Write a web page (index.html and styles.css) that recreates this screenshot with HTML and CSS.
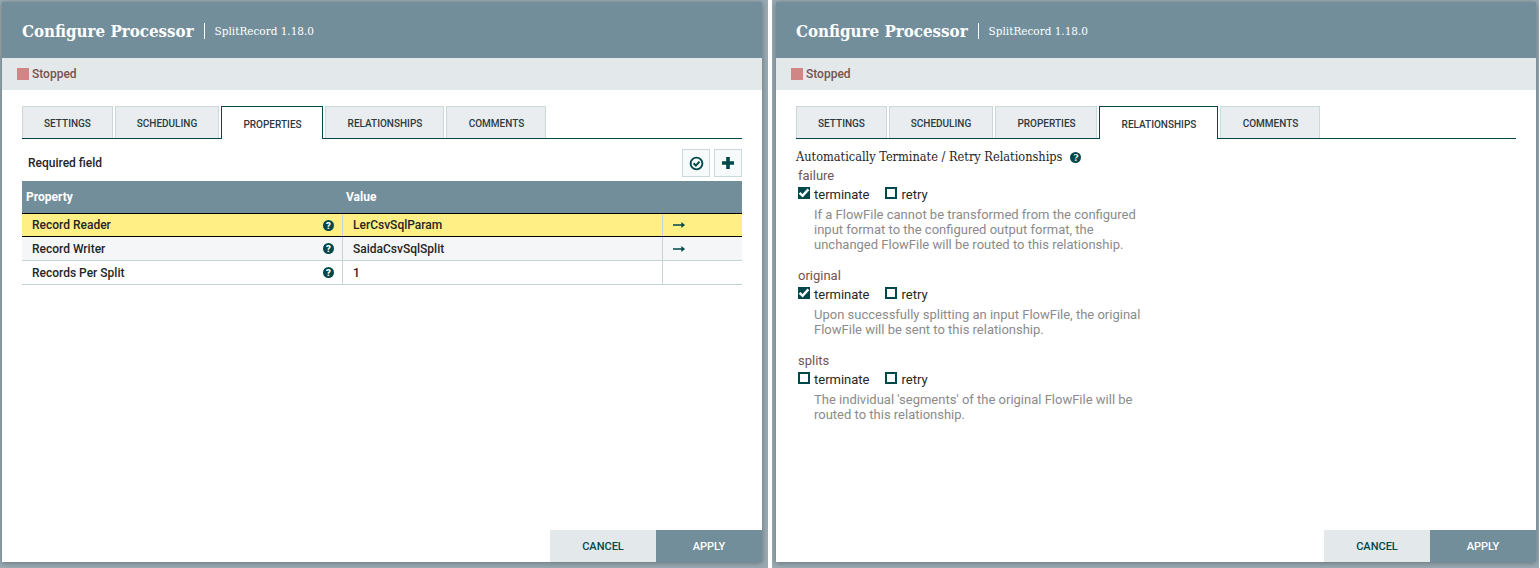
FILE: index.html
```html
<!DOCTYPE html>
<html lang="en">
<head>
    <meta charset="UTF-8">
    <meta name="viewport" content="width=device-width, initial-scale=1.0">
    <title>Configure Processor</title>
    <link rel="stylesheet" href="styles.css">
</head>
<body>
    <div class="shots">
        <!-- Properties tab -->
        <section class="shot shot-left">
            <div class="dialog">
                <header class="dialog-header">
                    <h1>Configure Processor</h1>
                    <span class="processor-type">SplitRecord 1.18.0</span>
                </header>
                <div class="status-bar"><span class="status-box"></span>Stopped</div>
                <div class="dialog-body">
                    <div class="tabs">
                        <div class="tab">SETTINGS</div>
                        <div class="tab tab-scheduling">SCHEDULING</div>
                        <div class="tab tab-properties active">PROPERTIES</div>
                        <div class="tab tab-relationships">RELATIONSHIPS</div>
                        <div class="tab tab-comments">COMMENTS</div>
                    </div>
                    <div class="toolbar">
                        <span class="required">Required field</span>
                        <div class="tool-buttons">
                            <button class="tool-btn">
                                <svg width="15" height="15" viewBox="0 0 15 15"><circle cx="7.5" cy="7.5" r="5.9" fill="none" stroke="#004849" stroke-width="1.9"/><path d="M4.6 7.2l2.3 2.4 3.6-4" fill="none" stroke="#004849" stroke-width="2"/></svg>
                            </button>
                            <button class="tool-btn">
                                <svg width="14" height="14" viewBox="0 0 14 14"><path d="M5.2 1h3.6v4.2H13v3.6H8.8V13H5.2V8.8H1V5.2h4.2z" fill="#004849"/></svg>
                            </button>
                        </div>
                    </div>
                    <div class="prop-table">
                        <div class="prop-head">
                            <div class="col-name">Property</div>
                            <div class="col-value">Value</div>
                        </div>
                        <div class="prop-row selected">
                            <div class="col-name">Record Reader<span class="help">?</span></div>
                            <div class="col-value">LerCsvSqlParam</div>
                            <div class="col-action"><svg class="arrow" width="12" height="6" viewBox="0 0 12 6"><path d="M0 2.2h9v1.6H0zM8.4 0L12 3 8.4 6z" fill="#004849"/></svg></div>
                        </div>
                        <div class="prop-row alt">
                            <div class="col-name">Record Writer<span class="help">?</span></div>
                            <div class="col-value">SaidaCsvSqlSplit</div>
                            <div class="col-action"><svg class="arrow" width="12" height="6" viewBox="0 0 12 6"><path d="M0 2.2h9v1.6H0zM8.4 0L12 3 8.4 6z" fill="#004849"/></svg></div>
                        </div>
                        <div class="prop-row">
                            <div class="col-name">Records Per Split<span class="help">?</span></div>
                            <div class="col-value">1</div>
                            <div class="col-action"></div>
                        </div>
                    </div>
                </div>
                <div class="dialog-footer">
                    <div class="btn btn-cancel">CANCEL</div>
                    <div class="btn btn-apply">APPLY</div>
                </div>
            </div>
        </section>

        <!-- Relationships tab -->
        <section class="shot shot-right">
            <div class="dialog">
                <header class="dialog-header">
                    <h1>Configure Processor</h1>
                    <span class="processor-type">SplitRecord 1.18.0</span>
                </header>
                <div class="status-bar"><span class="status-box"></span>Stopped</div>
                <div class="dialog-body">
                    <div class="tabs">
                        <div class="tab">SETTINGS</div>
                        <div class="tab tab-scheduling">SCHEDULING</div>
                        <div class="tab tab-properties">PROPERTIES</div>
                        <div class="tab tab-relationships active">RELATIONSHIPS</div>
                        <div class="tab tab-comments">COMMENTS</div>
                    </div>
                    <div class="rel-title">Automatically Terminate / Retry Relationships<span class="help">?</span></div>
                    <div class="rel">
                        <div class="rel-name">failure</div>
                        <div class="rel-options">
                            <span class="check on"><svg width="12" height="12" viewBox="0 0 12 12"><path d="M1.6 5.8l3 3 5.8-6.4" fill="none" stroke="#fff" stroke-width="2.5"/></svg></span><span class="opt">terminate</span>
                            <span class="check"></span><span class="opt">retry</span>
                        </div>
                        <p class="rel-desc">If a FlowFile cannot be transformed from the configured<br>input format to the configured output format, the<br>unchanged FlowFile will be routed to this relationship.</p>
                    </div>
                    <div class="rel">
                        <div class="rel-name">original</div>
                        <div class="rel-options">
                            <span class="check on"><svg width="12" height="12" viewBox="0 0 12 12"><path d="M1.6 5.8l3 3 5.8-6.4" fill="none" stroke="#fff" stroke-width="2.5"/></svg></span><span class="opt">terminate</span>
                            <span class="check"></span><span class="opt">retry</span>
                        </div>
                        <p class="rel-desc">Upon successfully splitting an input FlowFile, the original<br>FlowFile will be sent to this relationship.</p>
                    </div>
                    <div class="rel">
                        <div class="rel-name">splits</div>
                        <div class="rel-options">
                            <span class="check"></span><span class="opt">terminate</span>
                            <span class="check"></span><span class="opt">retry</span>
                        </div>
                        <p class="rel-desc">The individual 'segments' of the original FlowFile will be<br>routed to this relationship.</p>
                    </div>
                </div>
                <div class="dialog-footer">
                    <div class="btn btn-cancel">CANCEL</div>
                    <div class="btn btn-apply">APPLY</div>
                </div>
            </div>
        </section>
    </div>
</body>
</html>
```
FILE: styles.css
```css
* {
    box-sizing: border-box;
}
body {
    margin: 0;
    background: #fff;
    font-family: Roboto, sans-serif;
    overflow: hidden;
}
.shots {
    display: flex;
    width: 1540px;
    height: 568px;
    gap: 4px;
}
.shot {
    height: 568px;
    background: #9aabb3;
    flex: none;
    overflow: hidden;
}
.shot-left {
    width: 768px;
    padding: 2px 6px 6px 2px;
}
.shot-right {
    width: 767px;
    padding: 2px 3px 6px 4px;
}
.dialog {
    width: 760px;
    height: 560px;
    background: #fff;
    display: flex;
    flex-direction: column;
    box-shadow: 0 1px 6px rgba(0, 0, 0, 0.35);
}
.dialog-header {
    height: 56px;
    flex: none;
    background: #728e9b;
    display: flex;
    align-items: center;
    padding: 2px 0 0 20px;
    color: #fff;
}
.dialog-header h1 {
    margin: 0;
    font-family: "DejaVu Serif Condensed", "DejaVu Serif", serif;
    font-size: 16.8px;
    font-weight: bold;
    padding-right: 10px;
    border-right: 1px solid #fff;
    line-height: 16px;
}
.processor-type {
    font-family: "DejaVu Serif Condensed", "DejaVu Serif", serif;
    font-size: 11.65px;
    margin-left: 10px;
}
.status-bar {
    height: 32px;
    flex: none;
    background: #e3e8eb;
    display: flex;
    align-items: center;
    padding-left: 15px;
    color: #775351;
    font-size: 12px;
    font-weight: 500;
}
.status-box {
    width: 12px;
    height: 12px;
    background: #d18686;
    margin-right: 3px;
}
.dialog-body {
    flex: 1;
    padding: 16px 20px 0;
}
.tabs {
    display: flex;
    height: 33px;
    gap: 2px;
    border-bottom: 1px solid #004849;
}
.tab {
    width: 91px;
    height: 32px;
    padding-top: 2px;
    background: #e9edf0;
    border: 1px solid #cbd9da;
    border-bottom: none;
    color: #2d3a40;
    font-size: 10px;
    font-weight: 500;
    display: flex;
    align-items: center;
    justify-content: center;
}
.tab-scheduling { width: 104px; }
.tab-properties { width: 102px; padding-left: 1px; }
.tab-relationships { width: 119px; padding-left: 1px; }
.tab-comments { width: 100px; padding-left: 1px; }
.tab.active {
    height: 33px;
    background: #fff;
    border: 1px solid #004849;
    border-bottom: none;
}
.toolbar {
    display: flex;
    justify-content: space-between;
    align-items: center;
    height: 42px;
    padding: 6px 0 0 6px;
}
.required {
    font-size: 12px;
    font-weight: 500;
    color: #262626;
}
.tool-buttons {
    display: flex;
    gap: 4px;
}
.tool-btn {
    width: 28px;
    height: 28px;
    padding: 0;
    background: #f7fafb;
    border: 1px solid #cbd9da;
    display: flex;
    align-items: center;
    justify-content: center;
}
.prop-head {
    display: flex;
    height: 32px;
    background: #728e9b;
    color: #fff;
    font-size: 12px;
    font-weight: bold;
    align-items: center;
}
.prop-head .col-name {
    width: 320px;
    padding-left: 4px;
}
.prop-head .col-value {
    padding-left: 4px;
}
.prop-row {
    display: flex;
    height: 24px;
    color: #262626;
    font-size: 12px;
    font-weight: 500;
    border-bottom: 1px solid #c7d2d7;
    background: #fff;
}
.prop-row.alt {
    background: #f4f6f7;
}
.prop-row.selected {
    background: #ffef85;
    border-top: 1px solid #000;
    border-bottom: 1px solid #000;
}
.prop-row .col-name {
    width: 321px;
    padding: 0 8px 0 10px;
    display: flex;
    align-items: center;
    justify-content: space-between;
    border-right: 1px solid #c7d2d7;
}
.prop-row .col-value {
    width: 320px;
    padding-left: 10px;
    display: flex;
    align-items: center;
    border-right: 1px solid #c7d2d7;
}
.prop-row .col-action {
    flex: 1;
    padding-left: 10px;
    display: flex;
    align-items: center;
}
.help {
    width: 11px;
    height: 11px;
    border-radius: 50%;
    background: #004849;
    color: #fff;
    font-size: 9.5px;
    font-weight: 900;
    line-height: 11px;
    text-align: center;
    display: inline-block;
}
.rel-title {
    font-family: "DejaVu Serif Condensed", "DejaVu Serif", serif;
    font-size: 12.67px;
    color: #262626;
    margin: 10px 0 1px;
    line-height: 16px;
    display: flex;
    align-items: center;
}
.rel-title .help {
    margin-left: 8px;
}
.rel {
    padding-left: 2px;
    margin-bottom: 16px;
}
.rel-name {
    color: #775351;
    font-size: 13px;
    line-height: 16px;
    margin-top: 3px;
}
.rel-options {
    display: flex;
    align-items: center;
    height: 16px;
    margin-top: 2px;
    color: #262626;
    font-size: 13px;
}
.check {
    width: 12px;
    height: 12px;
    border: 2px solid #004849;
    display: inline-flex;
    align-items: center;
    justify-content: center;
    margin: 0 4px 3px 0;
}
.check svg {
    flex: none;
}
.check.on {
    background: #004849;
}
.opt {
    margin-right: 15px;
}
.opt:last-child {
    margin-left: 1px;
}
.rel-desc {
    margin: 5px 0 0 16px;
    color: #8b8b8b;
    font-size: 13px;
    line-height: 15px;
}
.dialog-footer {
    display: flex;
    justify-content: flex-end;
    flex: none;
}
.btn {
    width: 106px;
    height: 32px;
    font-size: 11px;
    font-weight: 500;
    display: flex;
    align-items: center;
    justify-content: center;
}
.btn-cancel {
    background: #e3e8eb;
    color: #004849;
}
.btn-apply {
    background: #728e9b;
    color: #fff;
}
```
